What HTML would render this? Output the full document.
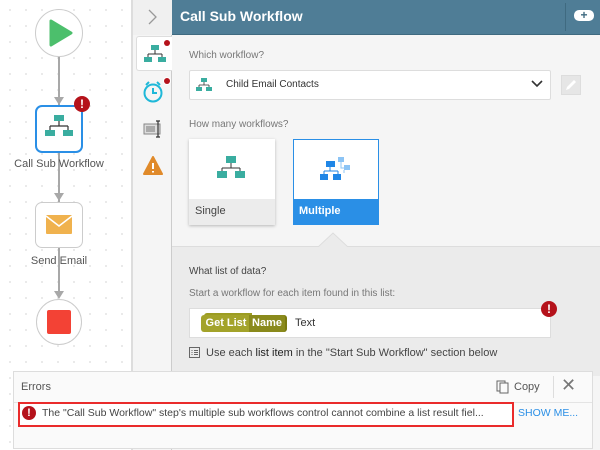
<!DOCTYPE html>
<html><head><meta charset="utf-8"><style>
*{box-sizing:border-box;margin:0;padding:0}
body{width:600px;height:450px;overflow:hidden;position:relative;font-family:"Liberation Sans",sans-serif;background:#fff;color:#444}
.abs{position:absolute}
.canvas{left:0;top:0;width:131px;height:450px;background-color:#fff;background-image:radial-gradient(#dcdcdc 0.7px,transparent 1px);background-size:16px 16px;background-position:2px 2px}
.lbl{font-size:11px;color:#555}
.sm{font-size:10px;color:#777}
</style></head><body>
<div class="abs canvas"></div>
<!-- flow -->
<div class="abs" style="left:58px;top:57px;width:2px;height:240px;background:#a8a8a8"></div>
<svg class="abs" style="left:53px;top:96px" width="12" height="10"><path d="M1 1 L6 9 L11 1Z" fill="#a8a8a8"/></svg>
<svg class="abs" style="left:53px;top:192px" width="12" height="10"><path d="M1 1 L6 9 L11 1Z" fill="#a8a8a8"/></svg>
<svg class="abs" style="left:53px;top:290px" width="12" height="10"><path d="M1 1 L6 9 L11 1Z" fill="#a8a8a8"/></svg>
<div class="abs" style="left:35px;top:9px;width:48px;height:48px;border-radius:50%;border:1px solid #ccc;background:#fff"></div>
<svg class="abs" style="left:48px;top:19px" width="26" height="28"><path d="M3 2 L23 14 L3 26 Z" fill="#4cbf6c" stroke="#4cbf6c" stroke-width="3" stroke-linejoin="round"/></svg>
<div class="abs" style="left:35px;top:105px;width:48px;height:48px;border-radius:7px;border:2px solid #2a8fe6;background:#fff"></div>
<svg class="abs" style="left:44px;top:114px" width="30" height="30"><rect x="10" y="1" width="10" height="6" fill="#3aada0"/><path d="M15 7v5M6 12h18M6 12v4M24 12v4" stroke="#333" stroke-width="1.2" fill="none"/><rect x="1" y="16" width="10" height="6" fill="#3aada0"/><rect x="19" y="16" width="10" height="6" fill="#3aada0"/></svg>
<div class="abs" style="left:74px;top:96px;width:16px;height:16px;border-radius:50%;background:#b5121b;color:#fff;font-size:12px;font-weight:bold;text-align:center;line-height:16px">!</div>
<div class="abs lbl" style="left:0;top:158px;width:118px;text-align:center">Call Sub Workflow</div>
<div class="abs" style="left:35px;top:202px;width:48px;height:46px;border-radius:7px;border:1px solid #ccc;background:#fff"></div>
<svg class="abs" style="left:46px;top:215px" width="26" height="20"><rect x="0" y="0" width="26" height="19" rx="1" fill="#f0b24e"/><path d="M0 1 L13 11 L26 1" stroke="#fff" stroke-width="1.5" fill="none"/></svg>
<div class="abs lbl" style="left:0;top:255px;width:118px;text-align:center">Send Email</div>
<div class="abs" style="left:36px;top:299px;width:46px;height:46px;border-radius:50%;border:1px solid #ccc;background:#fff"></div>
<div class="abs" style="left:47px;top:310px;width:24px;height:24px;background:#f34235;border-radius:2px"></div>
<!-- panel -->
<div class="abs" style="left:131px;top:0;width:469px;height:450px;background:#f5f5f5;border-left:2px solid #ddd"></div>
<div class="abs" style="left:133px;top:0;width:39px;height:35px;background:#f0f0f0"></div>
<svg class="abs" style="left:147px;top:8px" width="12" height="18"><path d="M2 2 L9 9 L2 16" stroke="#999" stroke-width="1.3" fill="none"/></svg>
<div class="abs" style="left:171px;top:35px;width:1px;height:415px;background:#ccc"></div>
<div class="abs" style="left:172px;top:0;width:428px;height:35px;background:#4f7d96;border-bottom:1px solid #3f6a80"></div>
<div class="abs" style="left:180px;top:8px;color:#fff;font-size:14px;font-weight:bold">Call Sub Workflow</div>
<div class="abs" style="left:565px;top:3px;width:1px;height:28px;background:#3f6a80"></div>
<div class="abs" style="left:574px;top:10px;width:20px;height:11px;background:#fff;border-radius:5px;color:#3f6a80;font-size:12px;font-weight:bold;text-align:center;line-height:11px">+</div>
<!-- tabs -->
<div class="abs" style="left:136px;top:36px;width:36px;height:35px;background:#fff;border:1px solid #ddd;border-right:none;border-radius:3px 0 0 3px"></div>
<svg class="abs" style="left:144px;top:44px" width="22" height="20"><rect x="7" y="1" width="8" height="5" fill="#3aada0"/><path d="M11 6v4M4 10h14M4 10v3M18 10v3" stroke="#333" stroke-width="1" fill="none"/><rect x="0" y="13" width="8" height="5" fill="#3aada0"/><rect x="14" y="13" width="8" height="5" fill="#3aada0"/></svg>
<div class="abs" style="left:164px;top:40px;width:6px;height:6px;border-radius:50%;background:#b5121b;box-shadow:0 0 0 1px #fff"></div>
<svg class="abs" style="left:142px;top:80px" width="22" height="24"><circle cx="11" cy="13" r="8.5" stroke="#1fb8d8" stroke-width="2" fill="none"/><path d="M11 8v5h4M4 5l3-3M18 5l-3-3" stroke="#1fb8d8" stroke-width="2" fill="none"/></svg>
<div class="abs" style="left:164px;top:78px;width:6px;height:6px;border-radius:50%;background:#b5121b;box-shadow:0 0 0 1px #fff"></div>
<svg class="abs" style="left:143px;top:120px" width="22" height="18"><rect x="1" y="4" width="16" height="10" fill="#ddd" stroke="#888"/><rect x="3" y="6" width="9" height="6" fill="#aaa"/><path d="M15 1v16M13 1h4M13 17h4" stroke="#333" stroke-width="1.2"/></svg>
<svg class="abs" style="left:143px;top:156px" width="20" height="20"><path d="M10 1 L19 18 L1 18 Z" fill="#e08a2a" stroke="#e08a2a" stroke-linejoin="round" stroke-width="2"/><path d="M10 7v6M10 15v1.5" stroke="#fff" stroke-width="2"/></svg>
<!-- content -->
<div class="abs sm" style="left:189px;top:50px">Which workflow?</div>
<div class="abs" style="left:189px;top:70px;width:362px;height:30px;background:#fff;border:1px solid #ddd;border-radius:2px"></div>
<svg class="abs" style="left:196px;top:78px" width="16" height="14"><rect x="5" y="0" width="6" height="4" fill="#3aada0"/><path d="M8 4v3M3 7h10M3 7v2M13 7v2" stroke="#333" stroke-width=".8" fill="none"/><rect x="0" y="9" width="6" height="4" fill="#3aada0"/><rect x="10" y="9" width="6" height="4" fill="#3aada0"/></svg>
<div class="abs" style="left:226px;top:79px;font-size:10px;color:#333">Child Email Contacts</div>
<svg class="abs" style="left:531px;top:80px" width="12" height="8"><path d="M1 1 L6 6 L11 1" stroke="#333" stroke-width="1.6" fill="none"/></svg>
<div class="abs" style="left:561px;top:75px;width:20px;height:20px;background:#e6e6e6;border:1px solid #ddd"></div>
<svg class="abs" style="left:564px;top:78px" width="14" height="14"><path d="M2 12 L3 9 L10 2 L12 4 L5 11 Z" fill="#fff"/></svg>
<div class="abs sm" style="left:189px;top:119px">How many workflows?</div>
<div class="abs" style="left:189px;top:139px;width:86px;height:86px;background:#fff;box-shadow:0 1px 3px rgba(0,0,0,.25)"></div>
<div class="abs" style="left:189px;top:199px;width:86px;height:26px;background:#ececec;font-size:11px;color:#444;padding:6px 6px">Single</div>
<svg class="abs" style="left:217px;top:155px" width="28" height="28"><rect x="9" y="1" width="10" height="7" fill="#3aada0"/><path d="M14 8v5M5 13h18M5 13v3M23 13v3" stroke="#333" stroke-width="1" fill="none"/><rect x="0" y="16" width="10" height="7" fill="#3aada0"/><rect x="18" y="16" width="10" height="7" fill="#3aada0"/></svg>
<div class="abs" style="left:293px;top:139px;width:86px;height:86px;background:#fff;border:1px solid #2a8fe6"></div>
<div class="abs" style="left:293px;top:199px;width:86px;height:26px;background:#2a8fe6;font-size:11px;color:#fff;font-weight:bold;padding:6px 6px">Multiple</div>
<svg class="abs" style="left:320px;top:156px" width="32" height="26"><rect x="18" y="1" width="6" height="5" fill="#8cc4f5"/><rect x="24" y="9" width="6" height="5" fill="#8cc4f5"/><path d="M21 6v6h3M24 14v3" stroke="#8cc4f5" fill="none"/><rect x="6" y="5" width="9" height="6" fill="#1f86e6"/><path d="M10 11v4M4 15h14M4 15v3M18 15v3" stroke="#1f86e6" stroke-width="1" fill="none"/><rect x="0" y="18" width="8" height="6" fill="#1f86e6"/><rect x="13" y="18" width="8" height="6" fill="#1f86e6"/></svg>
<!-- lower section -->
<div class="abs" style="left:172px;top:246px;width:428px;height:130px;background:#ebebeb;border-top:1px solid #ddd"></div>
<svg class="abs" style="left:318px;top:232px" width="30" height="16"><path d="M0 15 L15 1 L30 15" fill="#ebebeb" stroke="#ddd"/><rect x="0" y="15" width="30" height="2" fill="#ebebeb"/></svg>
<div class="abs" style="left:189px;top:266px;font-size:10px;color:#444">What list of data?</div>
<div class="abs sm" style="left:189px;top:288px">Start a workflow for each item found in this list:</div>
<div class="abs" style="left:189px;top:308px;width:362px;height:30px;background:#fff;border:1px solid #ddd"></div>
<div class="abs" style="left:204px;top:313px;width:48px;height:18px;background:#9c9c22;border-radius:3px 0 0 3px"></div>
<div class="abs" style="left:201px;top:315px;width:50px;height:17px;background:#a3a32a;border-radius:3px 0 0 3px;color:#fff;font-size:11px;font-weight:bold;text-align:center;line-height:17px">Get List</div>
<div class="abs" style="left:249px;top:315px;width:38px;height:17px;background:#8a8a1c;border-radius:0 3px 3px 0;color:#fff;font-size:11px;font-weight:bold;text-align:center;line-height:17px;border-right:2px solid #7a7a10">Name</div>
<div class="abs" style="left:295px;top:317px;font-size:11px;color:#333">Text</div>
<div class="abs" style="left:541px;top:301px;width:16px;height:16px;border-radius:50%;background:#b5121b;color:#fff;font-size:12px;font-weight:bold;text-align:center;line-height:16px">!</div>
<svg class="abs" style="left:189px;top:347px" width="12" height="12"><rect x=".5" y=".5" width="10" height="10" fill="none" stroke="#666"/><path d="M2.5 3.5h1M5 3.5h4M2.5 5.5h1M5 5.5h4M2.5 7.5h1M5 7.5h4" stroke="#666"/></svg>
<div class="abs" style="left:206px;top:347px;font-size:11px;color:#444">Use each <span style="color:#222">list item</span> in the "Start Sub Workflow" section below</div>
<!-- errors -->
<div class="abs" style="left:13px;top:371px;width:580px;height:78px;background:#fafafa;border:1px solid #ddd"></div>
<div class="abs" style="left:21px;top:381px;font-size:11px;color:#555">Errors</div>
<svg class="abs" style="left:496px;top:379px" width="14" height="15"><rect x="1" y="2" width="8" height="10" fill="none" stroke="#666"/><rect x="4" y="4" width="8" height="10" fill="#fafafa" stroke="#666"/></svg>
<div class="abs" style="left:514px;top:381px;font-size:11px;color:#555">Copy</div>
<div class="abs" style="left:553px;top:376px;width:1px;height:22px;background:#ddd"></div>
<div class="abs" style="left:561px;top:375px;font-size:18px;color:#777">✕</div>
<div class="abs" style="left:14px;top:402px;width:578px;height:1px;background:#e4e4e4"></div>
<div class="abs" style="left:18px;top:402px;width:496px;height:25px;border:2px solid #ea2b2b;background:#fff"></div>
<div class="abs" style="left:22px;top:406px;width:14px;height:14px;border-radius:50%;background:#b5121b;color:#fff;font-size:11px;font-weight:bold;text-align:center;line-height:14px">!</div>
<div class="abs" style="left:42px;top:407px;font-size:10.5px;color:#444;white-space:nowrap">The "Call Sub Workflow" step's multiple sub workflows control cannot combine a list result fiel...</div>
<div class="abs" style="left:518px;top:407px;font-size:10.5px;color:#2a8fe6">SHOW ME...</div>
</body></html>
